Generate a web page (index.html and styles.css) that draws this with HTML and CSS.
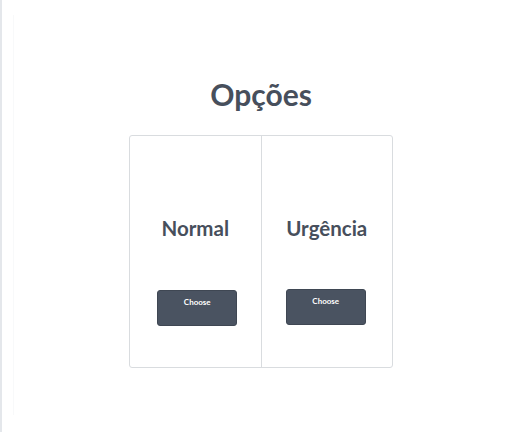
FILE: index.html
```html
<!DOCTYPE html>
<html lang="pt">
<head>
<meta charset="utf-8">
<link rel="stylesheet" href="styles.css">
</head>
<body>
<div class="frame">
  <div class="panel">
    <h1 class="title">Opções</h1>
    <div class="card">
      <div class="option">
        <h2 class="option-name">Normal</h2>
        <button class="choose choose-left">Choose</button>
      </div>
      <div class="option option-right">
        <h2 class="option-name">Urgência</h2>
        <button class="choose choose-right">Choose</button>
      </div>
    </div>
  </div>
</div>
</body>
</html>
```
FILE: styles.css
```css
html, body {
  margin: 0;
  padding: 0;
  background: #ffffff;
}
body {
  font-family: Lato, "Open Sans", sans-serif;
  color: #4a5160;
}
.frame {
  height: 432px;
  box-sizing: border-box;
  border-left: 2px solid #e4e7eb;
  padding: 15px 20px 17px 11px;
}
.panel {
  height: 100%;
  border-left: 1px solid #f8f9fa;
  display: flex;
  flex-direction: column;
  align-items: center;
}
.title {
  margin: 61px 0 23px;
  font-size: 30px;
  line-height: 36px;
  font-weight: 700;
  color: #474f5c;
}
.card {
  display: flex;
  width: 264px;
  height: 233px;
  box-sizing: border-box;
  border: 1px solid #d9dcdf;
  border-radius: 3px;
}
.option {
  flex: 1;
  display: flex;
  flex-direction: column;
  align-items: center;
  padding-top: 80px;
}
.option-right {
  border-left: 1px solid #d9dcdf;
}
.option-name {
  margin: 0 0 50px;
  font-size: 20.5px;
  line-height: 24px;
  font-weight: 700;
  color: #474f5c;
}
.choose {
  width: 80px;
  height: 36px;
  border: 1px solid #3f4753;
  border-radius: 3px;
  background: #4a5361;
  color: #ffffff;
  font-family: Lato, sans-serif;
  font-size: 8px;
  font-weight: 700;
  padding: 6px 0 0;
  display: flex;
  justify-content: center;
  align-items: flex-start;
  box-sizing: border-box;
}
.choose-left {
  margin-left: 4px;
}
.choose-right {
  margin-top: -1px;
  margin-left: -2px;
}
```
